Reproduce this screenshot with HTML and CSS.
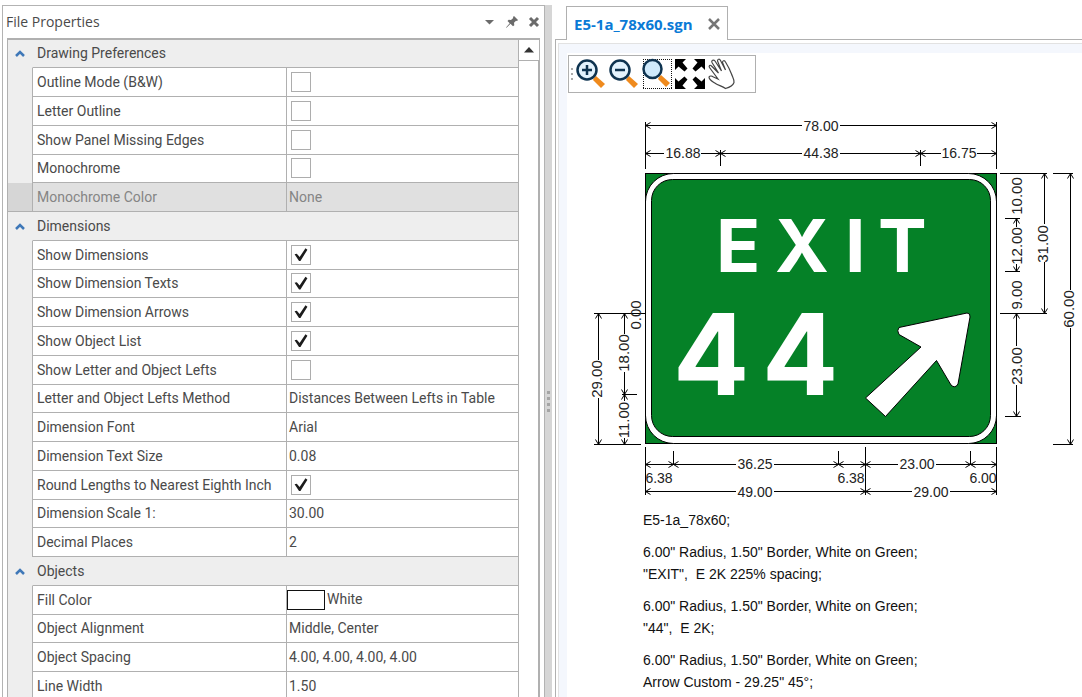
FILE: index.html
```html
<!DOCTYPE html>
<html lang="en">
<head>
<meta charset="utf-8">
<title>E5-1a_78x60.sgn</title>
<link rel="stylesheet" href="styles.css">
</head>
<body>
<div class="workspace">
  <section class="panel" aria-label="File Properties">
    <header class="panel-title">
      <h1>File Properties</h1>
      <button type="button" aria-label="Window position"><svg width="12" height="12" viewBox="0 0 12 12"><path d="M1 4h9L5.500 8.500z" fill="#6b6b6b"/></svg></button>
      <button type="button" aria-label="Auto hide"><svg width="12" height="12" viewBox="0 0 12 12"><path d="M8 0l4 4-1 1-1-.3-2 2 .3 2.500-1.300 1L4.500 7.800.5 11.700 0 11.500l3.700-4.300L1.500 5l1.200-1.200 2.300.2 2.200-2L7 1z" fill="#6b6b6b"/></svg></button>
      <button type="button" aria-label="Close panel"><svg width="12" height="12" viewBox="0 0 12 12"><path d="M2 2l8 8M10 2l-8 8" stroke="#6b6b6b" stroke-width="3" fill="none"/></svg></button>
    </header>
    <div class="grid">
      <table class="props">
        <colgroup><col class="c-gutter"><col class="c-name"><col class="c-value"></colgroup>
        <tbody>
          <tr class="group"><td><button type="button" aria-label="Collapse Drawing Preferences"><svg width="10" height="7" viewBox="0 0 10 7"><path d="M1 6l4-4 4 4" stroke="#3f78b8" stroke-width="2.500" fill="none"/></svg></button></td><th colspan="2">Drawing Preferences</th></tr>
          <tr><td></td><th><label for="p1">Outline Mode (B&amp;W)</label></th><td><input type="checkbox" id="p1"></td></tr>
          <tr><td></td><th><label for="p2">Letter Outline</label></th><td><input type="checkbox" id="p2"></td></tr>
          <tr><td></td><th><label for="p3">Show Panel Missing Edges</label></th><td><input type="checkbox" id="p3"></td></tr>
          <tr><td></td><th><label for="p4">Monochrome</label></th><td><input type="checkbox" id="p4"></td></tr>
          <tr class="disabled"><td></td><th>Monochrome Color</th><td>None</td></tr>
          <tr class="group"><td><button type="button" aria-label="Collapse Dimensions"><svg width="10" height="7" viewBox="0 0 10 7"><path d="M1 6l4-4 4 4" stroke="#3f78b8" stroke-width="2.500" fill="none"/></svg></button></td><th colspan="2">Dimensions</th></tr>
          <tr><td></td><th><label for="p5">Show Dimensions</label></th><td><input type="checkbox" id="p5" checked></td></tr>
          <tr><td></td><th><label for="p6">Show Dimension Texts</label></th><td><input type="checkbox" id="p6" checked></td></tr>
          <tr><td></td><th><label for="p7">Show Dimension Arrows</label></th><td><input type="checkbox" id="p7" checked></td></tr>
          <tr><td></td><th><label for="p8">Show Object List</label></th><td><input type="checkbox" id="p8" checked></td></tr>
          <tr><td></td><th><label for="p9">Show Letter and Object Lefts</label></th><td><input type="checkbox" id="p9"></td></tr>
          <tr><td></td><th>Letter and Object Lefts Method</th><td>Distances Between Lefts in Table</td></tr>
          <tr><td></td><th>Dimension Font</th><td>Arial</td></tr>
          <tr><td></td><th>Dimension Text Size</th><td>0.08</td></tr>
          <tr><td></td><th><label for="p10">Round Lengths to Nearest Eighth Inch</label></th><td><input type="checkbox" id="p10" checked></td></tr>
          <tr><td></td><th>Dimension Scale 1:</th><td>30.00</td></tr>
          <tr><td></td><th>Decimal Places</th><td>2</td></tr>
          <tr class="group"><td><button type="button" aria-label="Collapse Objects"><svg width="10" height="7" viewBox="0 0 10 7"><path d="M1 6l4-4 4 4" stroke="#3f78b8" stroke-width="2.500" fill="none"/></svg></button></td><th colspan="2">Objects</th></tr>
          <tr><td></td><th>Fill Color</th><td class="color"><span class="swatch"></span>White</td></tr>
          <tr><td></td><th>Object Alignment</th><td>Middle, Center</td></tr>
          <tr><td></td><th>Object Spacing</th><td>4.00, 4.00, 4.00, 4.00</td></tr>
          <tr><td></td><th>Line Width</th><td>1.50</td></tr>
        </tbody>
      </table>
      <div class="scroll">
        <button type="button" aria-label="Scroll up"><svg width="10" height="6" viewBox="0 0 10 6"><path d="M0 5.500L5 0l5 5.500z" fill="#333"/></svg></button>
        <div class="thumb"></div>
      </div>
    </div>
  </section>

  <div class="splitter"><i></i><i></i><i></i><i></i></div>

  <main class="document">
    <nav class="tabs">
      <div class="tab"><a href="#drawing">E5-1a_78x60.sgn</a><button type="button" aria-label="Close document"><svg width="12" height="12" viewBox="0 0 12 12"><path d="M1 1l10 10M11 1L1 11" stroke="#767676" stroke-width="2.500" fill="none"/></svg></button></div>
      <div class="tab-rest"></div>
    </nav>
    <div class="frame">
      <div class="canvas" id="drawing">
        <div class="toolbar" role="toolbar">
          <span class="grip"><i></i><i></i><i></i></span>
          <button type="button" aria-label="Zoom in"><svg width="32" height="32" viewBox="0 0 32 32"><path d="M19 20l2-2 9 8-4 4-8-8z" fill="#ef8a1d"/><circle cx="12" cy="12" r="9.500" fill="#e2f2fd" stroke="#0e3350" stroke-width="2.500"/><path d="M7 12h10M12 7v10" stroke="#0e3350" stroke-width="2.500"/></svg></button>
          <button type="button" aria-label="Zoom out"><svg width="32" height="32" viewBox="0 0 32 32"><path d="M19 20l2-2 9 8-4 4-8-8z" fill="#ef8a1d"/><circle cx="12" cy="12" r="9.500" fill="#e2f2fd" stroke="#0e3350" stroke-width="2.500"/><path d="M7 12h10" stroke="#0e3350" stroke-width="2.500"/></svg></button>
          <button type="button" aria-label="Zoom window"><svg width="32" height="32" viewBox="0 0 32 32"><path d="M2 1.500h29M2 30.500h29M2.500 1v30M30.500 1v30" fill="none" stroke="#111" stroke-dasharray="1 1"/><path d="M18 19l2-2 9 8-4 4-8-8z" fill="#ef8a1d"/><circle cx="11.500" cy="11" r="9" fill="#cfeafc" stroke="#0e3350" stroke-width="2.500"/></svg></button>
          <button type="button" aria-label="Zoom extents"><svg width="32" height="32" viewBox="0 0 32 32"><g id="ne"><path d="M20 1h11v11l-3.500-3.500-6 5-3-3 5-6z"/></g><use href="#ne" transform="matrix(-1 0 0 1 32 0)"/><use href="#ne" transform="matrix(1 0 0 -1 0 32)"/><use href="#ne" transform="matrix(-1 0 0 -1 32 32)"/></svg></button>
          <button type="button" aria-label="Pan"><svg width="32" height="32" viewBox="0 0 32 32"><path d="M3 19c1-1.500 3-1 4.500 0L12 21 3.500 9.500C2.500 7.500 4 6.500 5.500 8L12.500 15 6 4.500C5 2.500 7.500 1 9 3l6.500 10L11.500 3C11.500 1 13.500.5 14.500 2.500L19.500 12 16.500 4.500c0-2 2-2.500 3-.5C22 8 24 12 25.500 16c1 3 3 5.500 2.500 8.500-1 3-5 5-8.500 6-3-2.500-7-3-10-5C6.500 23.500 3 22 3 19z" fill="#fff" stroke="#444" stroke-width="1.200"/></svg></button>
        </div>

        <svg class="drawing" width="514" height="392" viewBox="568 113 514 392" role="img" aria-label="Exit 44 sign with dimensions">
          <defs>
            <marker id="a" viewBox="0 0 8 8" refX="7.500" refY="4" markerWidth="8" markerHeight="8" orient="auto-start-reverse"><path d="M2.500 1L7.500 4 2.500 7" fill="none" stroke="#000" stroke-width="1"/></marker>
          </defs>
          <rect x="645.500" y="173.500" width="351" height="270" class="green"/>
          <rect x="645.500" y="173.500" width="351" height="270" rx="28" class="ring"/>
          <rect x="651.500" y="179.500" width="339" height="257" rx="21" class="green"/>
          <path d="M645.500 200v217M996.500 200v217" stroke="#000"/>
          <text class="exit" y="272" x="716 775 845 878">EXIT</text>
          <text class="number" y="395" x="673 762">44</text>
          <path d="M899 327.500l68-14.500q3.500 0 3 4l-12 67q-3 5-7 1l-14.500-24.500-51 56-20-18.500 55.500-51-22-12.500q-2.500-4 0-7z" fill="#fff" stroke="#000"/>

          <g class="lines">
            <path d="M645.500 122v47M996.500 122v47M720.500 150v16M920.500 150v16"/>
            <path d="M645.500 447v48M865.500 447v48M996.500 447v48M673.500 451v14M838.500 451v14M970.500 451v14"/>
            <path d="M594 313.500h51M622 394.500h15M594 444.500h47"/>
            <path d="M1000 173.500h47M1053 173.500h20M1005 218.500h15M1005 271.500h15M1000 313.500h47M1005 416.500h16M1053 444.500h20"/>
          </g>
          <g class="lines arrows">
            <path d="M802 125.500H645.500"/><path d="M840 125.500h156.500"/>
            <path d="M664 153.500h-18.500"/><path d="M701 153.500h19.500"/><path d="M802 153.500h-81.500"/><path d="M840 153.500h80.500"/><path d="M941 153.500h-20.500"/><path d="M977 153.500h19.500"/>
            <path d="M598.500 360v-46.500"/><path d="M598.500 398v46.500"/>
            <path d="M624.500 334v-20.500"/><path d="M624.500 372v22.500"/><path d="M624.500 401v-6.500"/><path d="M624.500 438v6.500"/>
            <path d="M1016.500 227v-8.500"/><path d="M1016.500 264v7.500"/>
            <path d="M1016.500 346v-32.500"/><path d="M1016.500 385v31.500"/>
            <path d="M1044.500 224v-50.500"/><path d="M1044.500 262v51.500"/>
            <path d="M1070.500 290V173.500"/><path d="M1070.500 328v116.500"/>
            <path d="M680 464.500h-34.500"/><path d="M736 464.500h-62.500"/><path d="M774 464.500h64.500"/><path d="M850 464.500h-11.500"/><path d="M850 464.500h15.500"/><path d="M898 464.500h-32.500"/><path d="M936 464.500h34.500"/><path d="M980 464.500h-9.500"/><path d="M980 464.500h16.500"/><path d="M665 464.500h8.500"/>
            <path d="M736 491.500h-90.500"/><path d="M774 491.500h91.500"/><path d="M912 491.500h-46.500"/><path d="M950 491.500h46.500"/>
          </g>
          <g class="dims">
            <text x="821" y="131">78.00</text>
            <text x="683" y="158">16.88</text><text x="821" y="158">44.38</text><text x="959" y="158">16.75</text>
            <text x="755" y="469">36.25</text><text x="917" y="469">23.00</text>
            <text x="659" y="483">6.38</text><text x="851" y="483">6.38</text><text x="983" y="483">6.00</text>
            <text x="755" y="497">49.00</text><text x="931" y="497">29.00</text>
          </g>
          <g class="dims upright">
            <text transform="translate(602 379) rotate(-90)">29.00</text>
            <text transform="translate(629 353) rotate(-90)">18.00</text>
            <text transform="translate(629 420) rotate(-90)">11.00</text>
            <text transform="translate(641 315) rotate(-90)">0.00</text>
            <text transform="translate(1022 196) rotate(-90)">10.00</text>
            <text transform="translate(1022 246) rotate(-90)">12.00</text>
            <text transform="translate(1022 295) rotate(-90)">9.00</text>
            <text transform="translate(1022 366) rotate(-90)">23.00</text>
            <text transform="translate(1048 244) rotate(-90)">31.00</text>
            <text transform="translate(1074 309) rotate(-90)">60.00</text>
          </g>
        </svg>

        <div class="notes">
          <p>E5-1a_78x60;</p>
          <p>6.00" Radius, 1.50" Border, White on Green;<br>"EXIT",&nbsp; E 2K 225% spacing;</p>
          <p>6.00" Radius, 1.50" Border, White on Green;<br>"44",&nbsp; E 2K;</p>
          <p>6.00" Radius, 1.50" Border, White on Green;<br>Arrow Custom - 29.25" 45°;</p>
        </div>
      </div>
    </div>
  </main>
</div>
</body>
</html>
```

FILE: styles.css
```css
* { box-sizing: border-box; }

body {
  margin: 0;
  background: #fff;
  color: #4a4a4a;
  font: 14px/20px Roboto, "Liberation Sans", sans-serif;
}

button {
  display: flex;
  align-items: center;
  justify-content: center;
  padding: 0;
  border: 0;
  background: none;
}

.workspace {
  display: grid;
  grid-template-columns: minmax(0, 543fr) 7px minmax(0, 530fr);
  height: 100vh;
  padding: 5px 0 0 2px;
  overflow: hidden;
}

/* Properties panel */
.panel {
  display: flex;
  flex-direction: column;
  min-height: 0;
  padding: 0 4px;
  border: 1px solid #b3b3b3;
  border-bottom: 0;
}

.panel-title {
  display: flex;
  flex: none;
  align-items: center;
  gap: 10px;
  height: 32px;
}

.panel-title h1 {
  flex: 1;
  margin: 0 0 0 -1px;
  font: 14px/20px "Open Sans", "Noto Sans", sans-serif;
}

.grid {
  display: flex;
  flex: 1;
  min-height: 0;
  overflow: hidden;
  border: 1px solid #b0b0b0;
  border-top-width: 2px;
  border-bottom: 0;
}

.props {
  flex: 1;
  align-self: flex-start;
  table-layout: fixed;
  border-collapse: separate;
  border-spacing: 0;
}

.c-gutter { width: 24px; }
.c-name { width: 254px; }

.props td,
.props th {
  height: 29px;
  padding: 0 3px 1px 4px;
  border-bottom: 1px solid #b0b0b0;
  border-left: 1px solid #b0b0b0;
  font-weight: 400;
  text-align: left;
  white-space: nowrap;
}

.props tr:nth-child(4n + 1) > * { height: 28px; }

.props tr > td:first-child {
  padding: 0;
  border-bottom-color: #eee;
  border-left: 0;
  background: #eee;
}

.props td:last-child { padding-left: 2px; }

.props .group > * { background: #eee; }
.props .group th { border-left-color: #eee; }
.props .group button { width: 24px; height: 20px; }

.props .disabled > * { background: #e0e0e0; color: #858585; }
.props .disabled > td:first-child { background: #d6d6d6; border-bottom-color: #b0b0b0; }

.props input {
  display: grid;
  place-items: center;
  width: 20px;
  height: 20px;
  margin: 0 0 0 2px;
  border: 1px solid #adadad;
  background: #fff;
  appearance: none;
}

.props input:checked::before {
  content: "";
  width: 14px;
  height: 14px;
  background: #1c1c1c;
  clip-path: polygon(4% 48%, 20% 44%, 40% 68%, 82% 6%, 96% 16%, 46% 96%, 36% 96%);
}

.props td.color:last-child { padding-left: 0; }

.swatch {
  display: inline-block;
  width: 38px;
  height: 20px;
  margin-right: 2px;
  border: 1px solid #111;
  vertical-align: middle;
}

.scroll {
  display: flex;
  flex: none;
  flex-direction: column;
  width: 21px;
  border-left: 1px solid #b0b0b0;
}

.scroll button { height: 20px; }
.thumb { flex: 1; border: 1px solid #b0b0b0; border-width: 1px 1px 0 0; }

/* Splitter */
.splitter {
  display: flex;
  flex-direction: column;
  align-items: center;
  justify-content: center;
  gap: 3px;
  padding-top: 100px;
  background: #d6d6d6;
}

.splitter i { width: 3px; height: 3px; background: #a5a5a5; }

/* Document area */
.document {
  display: flex;
  flex-direction: column;
  min-width: 0;
  min-height: 0;
  padding: 1px 0 0 3px;
}

.tabs { display: flex; flex: none; height: 34px; }
.tabs::before { content: ""; width: 11px; border-bottom: 1px solid #b0b0b0; }
.tab-rest { flex: 1; border-bottom: 1px solid #b0b0b0; }

.tab {
  display: flex;
  align-items: center;
  gap: 15px;
  padding: 0 7px;
  border: 1px solid #b0b0b0;
  border-bottom: 0;
}

.tab a {
  color: #0a7ad6;
  font: 700 15px/20px "Open Sans", "Noto Sans", sans-serif;
  text-decoration: none;
}

.frame {
  flex: 1;
  min-height: 0;
  padding: 4px 0 0 3px;
  border-left: 1px solid #b0b0b0;
}

.canvas {
  height: 100%;
  overflow: hidden;
  padding: 2px 0 0 1px;
  border: solid #f4f7fd;
  border-width: 9px 0 0 8px;
  outline: 1px solid #e2e2e2;
}

.toolbar {
  display: flex;
  align-items: center;
  width: 188px;
  height: 38px;
  border: 1px solid #b0b0b0;
}

.toolbar button { width: 32px; height: 36px; margin-right: 1px; }
.toolbar button:last-child { margin-left: -1px; }

.grip { display: grid; gap: 3px; padding: 0 1px 0 2px; }
.grip i { width: 2px; height: 2px; background: #aaa; }
.grip + button { margin-left: 1px; }

.drawing { display: block; margin-top: 20px; }

.green { fill: #058127; stroke: #000; }
.ring { fill: #fff; stroke: #000; }
.exit { fill: #fff; font: 700 73px Inter, sans-serif; }
.number { fill: #fff; font: 700 113px Inter, sans-serif; }
.lines { fill: none; stroke: #000; }
.arrows path { marker-end: url(#a); }
.dims { fill: #222; font: 14px "Liberation Sans", Arial, sans-serif; text-anchor: middle; }
.upright { font-size: 15px; }

.notes {
  padding: 4px 0 0 75px;
  color: #111;
  font: 14px/22px "Liberation Sans", Arial, sans-serif;
}

.notes p { margin: 0 0 10px; }
```
